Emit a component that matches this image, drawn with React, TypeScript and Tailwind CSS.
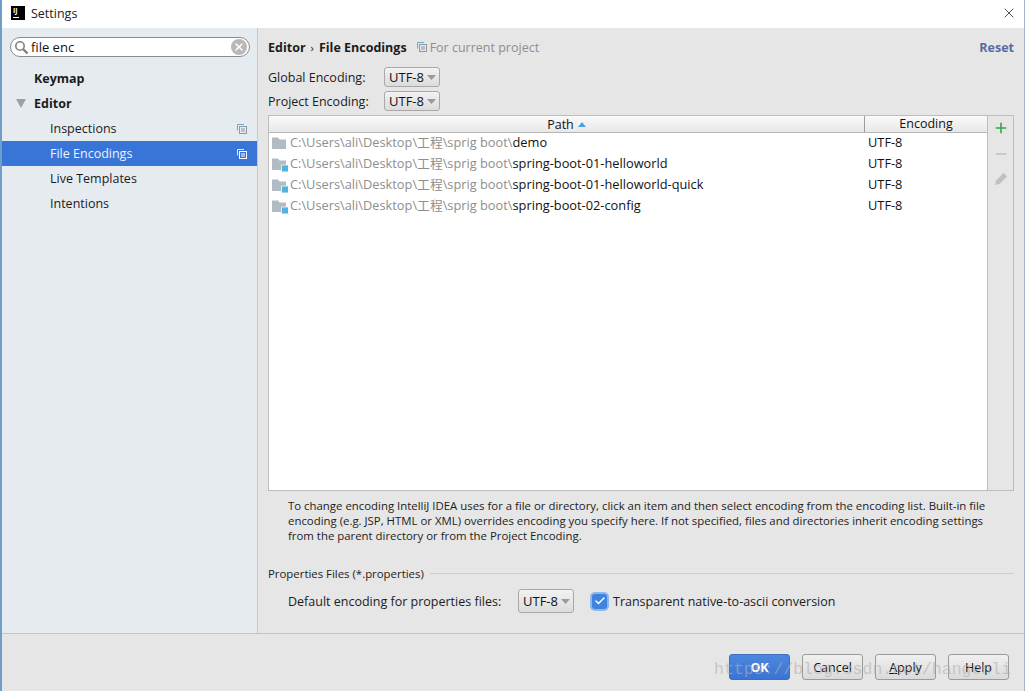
import React from "react";
import { X, Plus, Minus, Check } from "lucide-react";

function CopyIcon({ white }: { white?: boolean }) {
  const c = white ? "#dfe8f7" : "#6fa8c8";
  const d = white ? "#ffffff" : "#8a9aa6";
  return (
    <svg width="10" height="10" viewBox="0 0 10 10" className="shrink-0">
      <path d="M0.5 6.5V0.5H7" fill="none" stroke={c} />
      <rect x="2.5" y="2.5" width="7" height="7" fill="none" stroke={d} />
      <path d="M4 5h4M4 7h4" stroke={d} />
    </svg>
  );
}

function Folder({ badge }: { badge?: boolean }) {
  return (
    <svg width="16" height="16" viewBox="0 0 16 16" className="shrink-0">
      <path d="M0 2.5h6l1.5 2H14v9.5H0z" fill="#b0bbc3" />
      {badge && <rect x="9" y="8.5" width="7" height="7" fill="#e9e9e9" />}
      {badge && <rect x="10" y="9.5" width="6" height="6" fill="#4fb4e0" />}
    </svg>
  );
}

function Combo({ h = "h-[20px]" }: { h?: string }) {
  return (
    <div className={`w-[56px] ${h} flex items-center pl-[4px] gap-[3px] rounded-[3px] border border-[#a8a8a8] bg-gradient-to-b from-[#f2f2f2] to-[#dcdcdc] text-[13px] text-[#111]`}>
      <span>UTF-8</span>
      <svg width="9" height="5" viewBox="0 0 9 5"><path d="M0 0h9L4.5 5z" fill="#9a9a9a" /></svg>
    </div>
  );
}

const navCls = "h-[25px] flex items-center";

function Row({ name, badge }: { name: string; badge?: boolean }) {
  return (
    <div className="h-[21px] flex items-center">
      <div className="w-[596px] flex items-center pl-[3px] gap-[2px] whitespace-nowrap pb-[2px]">
        <Folder badge={badge} />
        <span className="text-[#8e8e8e]">C:\Users\ali\Desktop\工程\sprig boot\</span>
        <span className="text-[#111] -ml-[2px]">{name}</span>
      </div>
      <div className="pl-[3px] pb-[2px] text-[#111]">UTF-8</div>
    </div>
  );
}

function Btn({ children, primary }: { children: React.ReactNode; primary?: boolean }) {
  return (
    <div
      className={
        "w-[61px] h-[26px] rounded-[3px] border flex items-center justify-center " +
        (primary
          ? "bg-gradient-to-b from-[#4c87de] to-[#3b73d3] border-[#3f6fb8] text-white font-bold"
          : "bg-gradient-to-b from-[#f0f0f0] to-[#dadada] border-[#9a9a9a] text-[#111]")
      }
    >
      {children}
    </div>
  );
}

export default function App() {
  return (
    <div className="relative w-[1025px] h-[691px] overflow-hidden flex flex-col bg-[#e6e6e6] text-[12.5px] leading-[15px] text-[#1c1c1c] border-l-2 border-r border-l-[#6f9fc9] border-r-[#9fb4c6] font-['Open_Sans','Noto_Sans_CJK_SC',sans-serif]">
      <div className="h-[28px] shrink-0 bg-white flex items-center pl-[9px] pr-[7px] pb-[2px]">
        <div className="w-[14px] h-[14px] bg-black text-white text-[7px] leading-[7px] font-bold pl-[2px] pt-[1px] relative">
          IJ
          <div className="absolute left-[2px] bottom-[2px] w-[6px] h-[1px] bg-white" />
        </div>
        <span className="ml-[6px] text-[#222]">Settings</span>
        <X className="ml-auto" size={16} strokeWidth={1.1} color="#111" />
      </div>

      <div className="flex flex-1 min-h-0 border-b border-[#c4c4c4]">
        <div className="w-[256px] shrink-0 bg-[#e6ebf0] border-r border-[#c6c9cc] pt-[9px]">
          <div className="mx-[8px] h-[20px] w-[240px] rounded-full bg-white border border-[#8c8c8c] flex items-center pl-[3px] pr-[2px]">
            <svg width="15" height="15" viewBox="0 0 15 15" className="shrink-0">
              <circle cx="6" cy="6" r="4.2" fill="none" stroke="#808080" strokeWidth="1.6" />
              <path d="M9 9l4.5 4.5" stroke="#808080" strokeWidth="2.4" />
            </svg>
            <span className="ml-[2px] text-[13px] text-[#111]">file enc</span>
            <div className="ml-auto w-[16px] h-[16px] rounded-full bg-[#b8b8b8] flex items-center justify-center">
              <X size={12} strokeWidth={3.2} color="#fff" />
            </div>
          </div>
          <div className="mt-[9px]">
            <div className={`${navCls} pl-[32px] font-bold`}>Keymap</div>
            <div className={`${navCls} pl-[14px] font-bold`}>
              <svg width="10" height="9" viewBox="0 0 10 9" className="mr-[8px]"><path d="M0 0h10L5 9z" fill="#a0a0a0" /></svg>
              Editor
            </div>
            <div className={`${navCls} pl-[48px] pr-[10px] justify-between`}>Inspections<CopyIcon /></div>
            <div className={`${navCls} pl-[48px] pr-[10px] justify-between bg-[#3875d7] text-[#eef3fb]`}>File Encodings<CopyIcon white /></div>
            <div className={`${navCls} pl-[48px]`}>Live Templates</div>
            <div className={`${navCls} pl-[48px]`}>Intentions</div>
          </div>
        </div>

        <div className="flex-1 min-w-0 pl-[10px] pr-[10px] pt-[11px]">
          <div className="h-[16px] flex items-center whitespace-nowrap">
            <span className="font-bold">Editor</span>
            <span className="mx-[5px] text-[11px]">›</span>
            <span className="font-bold">File Encodings</span>
            <span className="ml-[10px] mr-[3px]"><CopyIcon /></span>
            <span className="text-[#8e8e8e]">For current project</span>
            <span className="ml-auto font-bold text-[#5a6aa3]">Reset</span>
          </div>

          <div className="mt-[12px] flex items-center h-[20px]">
            <span className="w-[116px]">Global Encoding:</span>
            <Combo />
          </div>
          <div className="mt-[4px] flex items-center h-[20px]">
            <span className="w-[116px]">Project Encoding:</span>
            <Combo />
          </div>

          <div className="mt-[4px] flex h-[376px] w-[746px] border border-[#bdbdbd]">
            <div className="w-[719px] shrink-0 bg-white border-r border-[#bdbdbd] text-[12.8px]">
              <div className="h-[17px] flex bg-gradient-to-b from-[#fafafa] to-[#e8e8e8] border-b border-[#b4b4b4] text-[12.5px]">
                <div className="w-[596px] border-r border-[#9c9c9c] flex items-center justify-center gap-[4px] text-[#111]">
                  Path
                  <svg width="8" height="5" viewBox="0 0 8 5"><path d="M0 5L4 0l4 5z" fill="#4aa3df" /></svg>
                </div>
                <div className="flex-1 text-center text-[#111]">Encoding</div>
              </div>
              <div>
                <Row name="demo" />
                <Row name="spring-boot-01-helloworld" badge />
                <Row name="spring-boot-01-helloworld-quick" badge />
                <Row name="spring-boot-02-config" badge />
              </div>
            </div>
            <div className="flex-1 flex flex-col items-center pt-[4px] gap-[10px]">
              <Plus size={16} strokeWidth={2.4} color="#2fa84f" />
              <Minus size={16} strokeWidth={2} color="#c0c0c0" />
              <svg width="14" height="14" viewBox="0 0 14 14"><path d="M9.5 1l3.5 3.5-7.5 7.5-4.5 1 1-4.5z" fill="#c0c0c0" /></svg>
            </div>
          </div>

          <div className="mt-[7px] pl-[20px] pr-[20px] text-[11.4px] leading-[15px] text-[#1c1c1c]">
            To change encoding IntelliJ IDEA uses for a file or directory, click an item and then select encoding from the encoding list. Built-in file encoding (e.g. JSP, HTML or XML) overrides encoding you specify here. If not specified, files and directories inherit encoding settings from the parent directory or from the Project Encoding.
          </div>

          <div className="mt-[23px] flex items-center gap-[6px] text-[11.4px]">
            <span className="whitespace-nowrap">Properties Files (*.properties)</span>
            <div className="flex-1 h-px bg-[#cfcfcf]" />
          </div>

          <div className="mt-[8px] pl-[20px] flex items-center whitespace-nowrap">
            <span className="w-[230px]">Default encoding for properties files:</span>
            <Combo h="h-[24px]" />
            <div className="ml-[18px] w-[15px] h-[15px] rounded-[3px] bg-[#3d84e0] ring-2 ring-[#8fb8ea] flex items-center justify-center">
              <Check size={12} strokeWidth={3} color="#fff" />
            </div>
            <span className="ml-[6px]">Transparent native-to-ascii conversion</span>
          </div>
        </div>
      </div>

      <div className="h-[57px] shrink-0 flex items-start justify-end gap-[12px] pt-[20px] pr-[15px]">
        <Btn primary>OK</Btn>
        <Btn>Cancel</Btn>
        <Btn><span><span className="underline">A</span>pply</span></Btn>
        <Btn>Help</Btn>
      </div>

      <div className="absolute left-[712px] top-[660px] text-[16.5px] leading-[20px] text-[#b0b0a8]/60 font-['Liberation_Mono',monospace] whitespace-nowrap">
        https://blog.csdn.net/hangenli
      </div>
    </div>
  );
}
